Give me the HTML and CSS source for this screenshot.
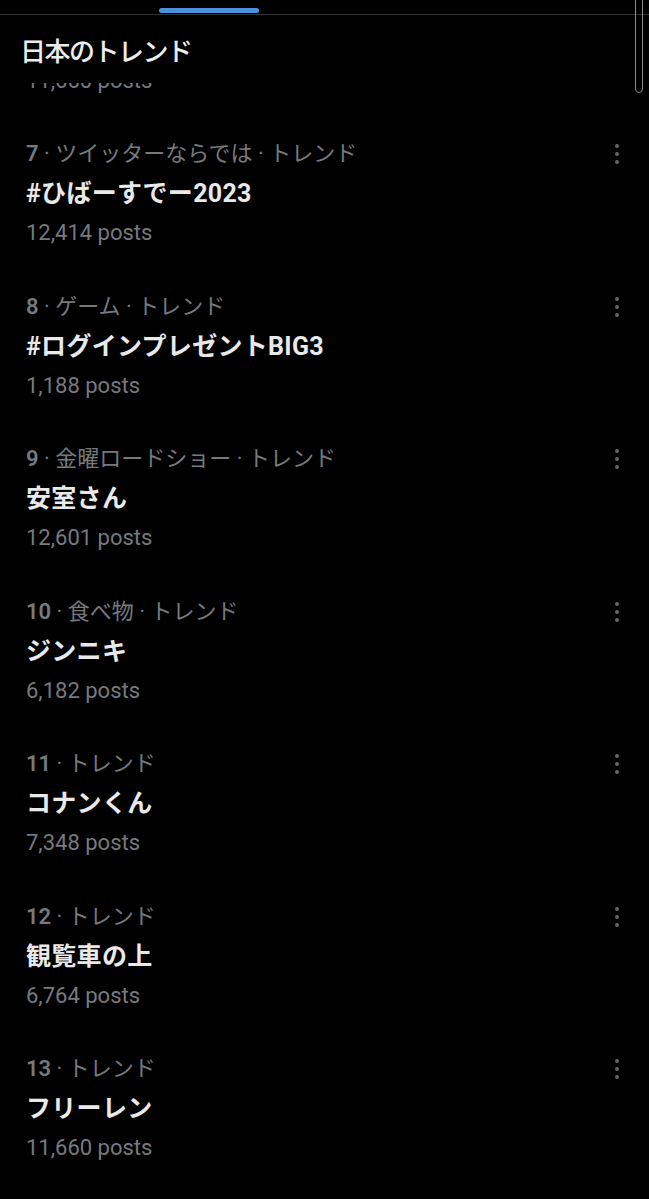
FILE: index.html
```html
<!DOCTYPE html>
<html lang="ja">
<head>
<meta charset="utf-8">
<link rel="stylesheet" href="styles.css">
</head>
<body>
<div class="page">
  <div class="tabbar"><div class="indicator"></div></div>
  <header class="header"><h1 class="title">日本のトレンド</h1></header>
  <div class="viewport">
    <ul class="list">
      <li class="item"><div class="text"><div class="meta"><span class="num">6</span> · トレンド</div><div class="name">トレンド</div><div class="posts">11,660 posts</div></div><svg class="more" width="4" height="20" viewBox="0 0 4 20"><circle cx="2" cy="2" r="2"/><circle cx="2" cy="10" r="2"/><circle cx="2" cy="18" r="2"/></svg></li>
      <li class="item"><div class="text"><div class="meta"><span class="num">7</span> · ツイッターならでは · トレンド</div><div class="name">#ひばーすでー2023</div><div class="posts">12,414 posts</div></div><svg class="more" width="4" height="20" viewBox="0 0 4 20"><circle cx="2" cy="2" r="2"/><circle cx="2" cy="10" r="2"/><circle cx="2" cy="18" r="2"/></svg></li>
      <li class="item"><div class="text"><div class="meta"><span class="num">8</span> · ゲーム · トレンド</div><div class="name">#ログインプレゼントBIG3</div><div class="posts">1,188 posts</div></div><svg class="more" width="4" height="20" viewBox="0 0 4 20"><circle cx="2" cy="2" r="2"/><circle cx="2" cy="10" r="2"/><circle cx="2" cy="18" r="2"/></svg></li>
      <li class="item"><div class="text"><div class="meta"><span class="num">9</span> · 金曜ロードショー · トレンド</div><div class="name">安室さん</div><div class="posts">12,601 posts</div></div><svg class="more" width="4" height="20" viewBox="0 0 4 20"><circle cx="2" cy="2" r="2"/><circle cx="2" cy="10" r="2"/><circle cx="2" cy="18" r="2"/></svg></li>
      <li class="item"><div class="text"><div class="meta"><span class="num">10</span> · 食べ物 · トレンド</div><div class="name">ジンニキ</div><div class="posts">6,182 posts</div></div><svg class="more" width="4" height="20" viewBox="0 0 4 20"><circle cx="2" cy="2" r="2"/><circle cx="2" cy="10" r="2"/><circle cx="2" cy="18" r="2"/></svg></li>
      <li class="item"><div class="text"><div class="meta"><span class="num">11</span> · トレンド</div><div class="name">コナンくん</div><div class="posts">7,348 posts</div></div><svg class="more" width="4" height="20" viewBox="0 0 4 20"><circle cx="2" cy="2" r="2"/><circle cx="2" cy="10" r="2"/><circle cx="2" cy="18" r="2"/></svg></li>
      <li class="item"><div class="text"><div class="meta"><span class="num">12</span> · トレンド</div><div class="name">観覧車の上</div><div class="posts">6,764 posts</div></div><svg class="more" width="4" height="20" viewBox="0 0 4 20"><circle cx="2" cy="2" r="2"/><circle cx="2" cy="10" r="2"/><circle cx="2" cy="18" r="2"/></svg></li>
      <li class="item"><div class="text"><div class="meta"><span class="num">13</span> · トレンド</div><div class="name">フリーレン</div><div class="posts">11,660 posts</div></div><svg class="more" width="4" height="20" viewBox="0 0 4 20"><circle cx="2" cy="2" r="2"/><circle cx="2" cy="10" r="2"/><circle cx="2" cy="18" r="2"/></svg></li>
    </ul>
  </div>
  <div class="scrollbar"></div>
</div>
</body>
</html>
```

FILE: styles.css
```css
html, body {
  margin: 0;
  padding: 0;
  background: #000;
}
.page {
  position: relative;
  width: 649px;
  height: 1199px;
  overflow: hidden;
  background: #000;
  font-family: Roboto, "Noto Sans CJK JP", sans-serif;
  color: #e7e9ea;
}
.tabbar {
  height: 14px;
  border-bottom: 1px solid #2f3336;
}
.indicator {
  margin-left: 159px;
  position: relative;
  top: 8px;
  width: 100px;
  height: 5px;
  border-radius: 3px;
  background: #4b91dc;
}
.header {
  height: 68px;
  background: #000;
}
.title {
  margin: 0;
  padding: 15px 0 0 20px;
  line-height: 40px;
  font-size: 26px;
  font-weight: 500;
  letter-spacing: -1.5px;
  color: #ececec;
  font-family: "Noto Sans CJK JP", sans-serif;
}
.viewport {
  overflow: hidden;
  height: 1116px;
}
.list {
  list-style: none;
  margin: -118.5px 0 0;
  padding: 0;
}
.item {
  display: flex;
  justify-content: space-between;
  align-items: flex-start;
  height: 152.5px;
  box-sizing: border-box;
  padding: 22px 30px 0 26px;
}
.meta {
  line-height: 30px;
  font-size: 22px;
  color: #767a7f;
  white-space: nowrap;
}
.num {
  font-weight: 600;
}
.name {
  margin-top: 10px;
  line-height: 30px;
  font-size: 25px;
  font-weight: 700;
  letter-spacing: 0.3px;
  color: #e9e9e9;
  white-space: nowrap;
}
.posts {
  margin-top: 9px;
  line-height: 30px;
  font-size: 22px;
  color: #767a7f;
}
.more {
  margin-top: 5px;
  fill: #62676b;
}
.scrollbar {
  position: absolute;
  right: 6px;
  top: -6px;
  width: 6px;
  height: 97px;
  border: 1px solid #8a8a8a;
  border-radius: 4px;
}
```
